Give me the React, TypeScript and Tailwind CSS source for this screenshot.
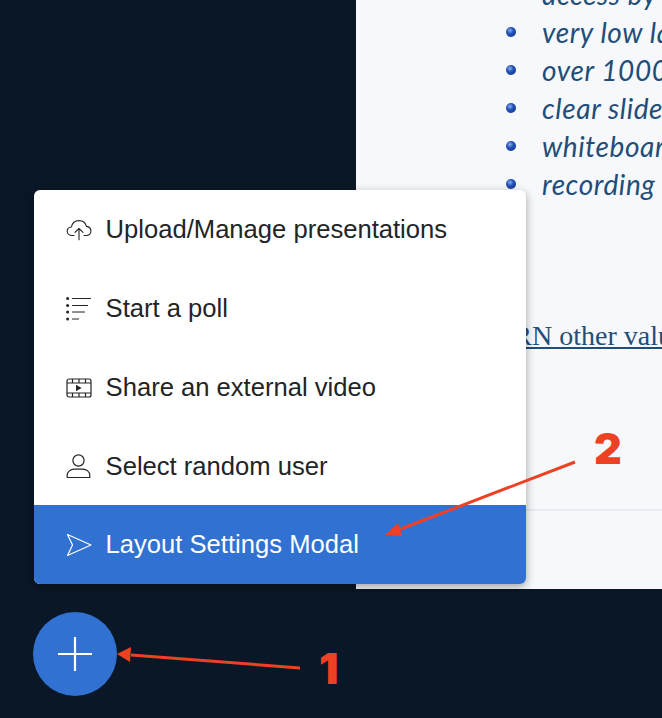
import React from 'react';

const CloudIcon = () => (
    <svg width="26" height="22" viewBox="0 0 26 22" fill="none" stroke="currentColor" strokeWidth="1.1" strokeLinecap="round" strokeLinejoin="round">
        <path d="M8 16.5H6.2C3.4 16.5 1.2 14.6 1.2 12.2c0-2.2 1.8-4 4.2-4.2C6.2 4.2 9.2 1.6 13 1.6c3.7 0 6.6 2.5 7.4 5.8 2.6.2 4.5 2.2 4.5 4.7 0 2.5-2 4.4-4.7 4.4H18" />
        <path d="M13 20.8V9.6M9 13.4l4-3.9 4 3.9" />
    </svg>
);

const PollIcon = () => (
    <svg width="26" height="24" viewBox="0 0 26 24" fill="none" stroke="currentColor" strokeWidth="1.2" strokeLinecap="round">
        <path d="M6.5 1.5h18M6.5 8.5h15M6.5 15h12M6.5 22h6" />
        <g fill="currentColor" stroke="none">
            <circle cx="1.6" cy="1.5" r="1.5" />
            <circle cx="1.6" cy="8.5" r="1.5" />
            <circle cx="1.6" cy="15" r="1.5" />
            <circle cx="1.6" cy="22" r="1.5" />
        </g>
    </svg>
);

const VideoIcon = () => (
    <svg width="26" height="20" viewBox="0 0 26 20" fill="none" stroke="currentColor" strokeWidth="1.2">
        <rect x="1" y="1" width="24" height="18" rx="2" />
        <path d="M1 5h24M1 15h24M6.5 1v4M13 1v4M19.5 1v4M6.5 15v4M13 15v4M19.5 15v4" />
        <path d="M10 6.8v6.4l5.6-3.2z" fill="currentColor" stroke="none" />
    </svg>
);

const UserIcon = () => (
    <svg width="25" height="26" viewBox="0 0 25 26" fill="none" stroke="currentColor" strokeWidth="1.2" strokeLinejoin="round">
        <circle cx="12.5" cy="7.5" r="5.6" />
        <path d="M1.2 24.5v-2.2c0-3.6 3.4-6.2 6.8-6.2h9c3.4 0 6.8 2.6 6.8 6.2v2.2z" />
    </svg>
);

const SendIcon = () => (
    <svg width="26" height="24" viewBox="0 0 26 24" fill="none" stroke="currentColor" strokeWidth="1.2" strokeLinejoin="round">
        <path d="M1.5 1.5L25 12 1.5 22.5 6.5 12z" />
    </svg>
);

const menuItems = [
    { label: 'Upload/Manage presentations', icon: <CloudIcon /> },
    { label: 'Start a poll', icon: <PollIcon /> },
    { label: 'Share an external video', icon: <VideoIcon /> },
    { label: 'Select random user', icon: <UserIcon /> },
    { label: 'Layout Settings Modal', icon: <SendIcon />, active: true },
];

const bullets = ['access by', 'very low latency', 'over 1000 users', 'clear slides', 'whiteboard', 'recording'];

const App = () => {
    return (
        <div className="relative flex w-[662px] h-[718px] overflow-hidden bg-[#0a1727] font-['Liberation_Sans',Arial,sans-serif]">
            <aside className="relative z-10 flex w-[356px] shrink-0 flex-col justify-end pl-[33px] pb-[22px]">
                <div className="ml-px mb-[28px] w-[492px] shrink-0 overflow-hidden rounded-[6px] bg-white shadow-[0_3px_10px_rgba(0,0,0,0.35)]">
                    {menuItems.map((item) => (
                        <div
                            key={item.label}
                            className={`flex h-[78.8px] items-center pt-px ${item.active ? 'bg-[#3071d2] text-white' : 'text-[#222426]'}`}
                        >
                            <span className="flex w-[71.6px] shrink-0 pl-[32px]">{item.icon}</span>
                            <span className="text-[25.6px] leading-none whitespace-nowrap">{item.label}</span>
                        </div>
                    ))}
                </div>
                <button className="flex h-[84px] w-[84px] shrink-0 items-center justify-center rounded-full bg-[#3071d2] text-white">
                    <svg width="34" height="34" viewBox="0 0 34 34" stroke="currentColor" strokeWidth="2.2">
                        <path d="M17 0v34M0 17h34" />
                    </svg>
                </button>
            </aside>

            <main className="flex h-[589px] flex-1 flex-col overflow-hidden bg-[#f6f8fb]">
                <ul className="-mt-[25px] ml-[150px] w-[400px]">
                    {bullets.map((b) => (
                        <li key={b} className="flex h-[38px] items-center whitespace-nowrap">
                            <span className="mr-[26px] h-[10px] w-[10px] shrink-0 rounded-full bg-[radial-gradient(circle_at_40%_35%,#8fb0ee_0%,#2252b8_38%,#0c2f80_100%)]" />
                            <span className="font-['Lato',sans-serif] text-[28px] italic leading-none tracking-[0.6px] text-[#214d78]">{b}</span>
                        </li>
                    ))}
                </ul>
                <p className="mt-[117px] ml-[120px] h-[32px] w-[400px] whitespace-nowrap font-['Liberation_Serif',serif] text-[28px] leading-[32px] text-[#1f4e79] underline">
                    EARN other values
                </p>
                <div className="mt-[157px] h-[2px] w-full shrink-0 bg-[#e6ebf1]" />
            </main>

            {/* annotations on top of the screenshot */}
            <svg className="absolute left-0 top-0 z-20" width="662" height="718" viewBox="0 0 662 718" fill="#ee4124" stroke="none">
                <path d="M300 668L131 655" stroke="#ee4124" strokeWidth="3" fill="none" />
                <path d="M117 654L131 647L130 662z" />
                <path d="M575 462L398 530" stroke="#ee4124" strokeWidth="3" fill="none" />
                <path d="M385 535L398 523L402 536z" />
            </svg>
            <span className="absolute left-[319px] top-[647px] z-20 font-['Inter',sans-serif] text-[43px] leading-none font-black text-[#ee4124]">1</span>
            <span className="absolute left-[594px] top-[427px] z-20 font-['Inter',sans-serif] text-[43px] leading-none font-black text-[#ee4124]">2</span>
        </div>
    );
};

export default App;
